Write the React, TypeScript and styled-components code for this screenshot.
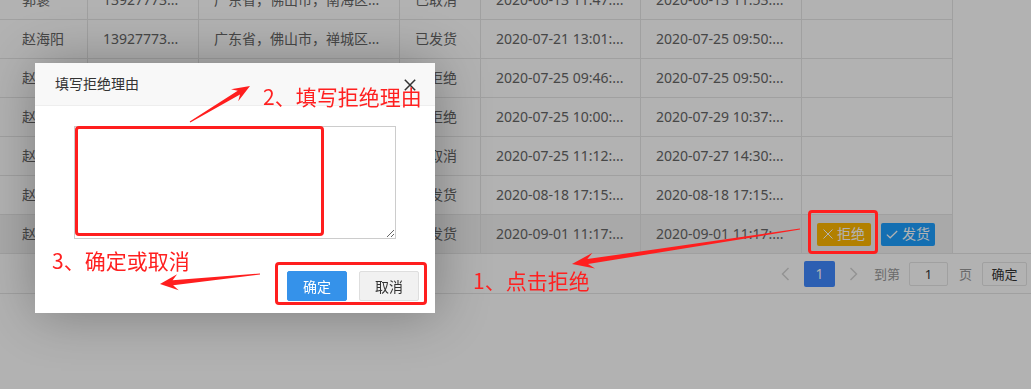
import React from 'react';
import styled, { createGlobalStyle } from 'styled-components';

const GlobalStyle = createGlobalStyle`
  html, body {
    margin: 0;
    padding: 0;
    background: #fff;
  }
  body {
    font-family: "Noto Sans", "Noto Sans CJK SC", sans-serif;
    font-size: 14px;
    color: #666;
  }
`;

const Page = styled.div`
  position: relative;
  width: 1031px;
  height: 389px;
  overflow: hidden;
  background: #fff;
`;

// the list is scrolled a little, the first row is cut at the top
const TableView = styled.div`
  margin-top: -19px;
`;

const Table = styled.table`
  width: 953px;
  table-layout: fixed;
  border-collapse: separate;
  border-spacing: 0;
`;

const Row = styled.tr<{ $hover?: boolean }>`
  background: ${(p) => (p.$hover ? '#f2f2f2' : '#fff')};
`;

const Cell = styled.td<{ $first?: boolean }>`
  height: 20px;
  padding: 9px 15px 9px ${(p) => (p.$first ? '22px' : '15px')};
  line-height: 20px;
  border-right: 1px solid #e6e6e6;
  border-bottom: 1px solid #e6e6e6;
  white-space: nowrap;
  overflow: hidden;
  color: #666;
`;

const Actions = styled.div`
  display: flex;
  align-items: center;
  gap: 10px;
  height: 20px;
`;

const SmallBtn = styled.span<{ $tone: 'warm' | 'normal' }>`
  display: inline-flex;
  align-items: center;
  justify-content: center;
  gap: 4px;
  width: 54px;
  height: 23px;
  flex: none;
  border-radius: 2px;
  font-size: 14px;
  color: #fff;
  background: ${(p) => (p.$tone === 'warm' ? '#ffb800' : '#1e9fff')};
`;

const PageBar = styled.div`
  display: flex;
  align-items: center;
  justify-content: flex-end;
  height: 39px;
  margin-top: -1px;
  padding-right: 4px;
  border-top: 1px solid #e6e6e6;
  border-bottom: 1px solid #e6e6e6;
  font-size: 13px;
  color: #999;
`;

const Chevron = styled.span<{ $gap: number }>`
  display: flex;
  justify-content: center;
  width: 20px;
  margin-right: ${(p) => p.$gap}px;
`;

const Curr = styled.span`
  display: flex;
  align-items: center;
  justify-content: center;
  width: 31px;
  height: 26px;
  margin-right: 9px;
  border-radius: 2px;
  background: #3f89ff;
  color: #fff;
  font-size: 14px;
`;

const Label = styled.span<{ $gap: number }>`
  margin-right: ${(p) => p.$gap}px;
`;

const SkipInput = styled.span`
  display: flex;
  align-items: center;
  justify-content: center;
  width: 39px;
  height: 24px;
  margin-right: 11px;
  box-sizing: border-box;
  border: 1px solid #e6e6e6;
  border-radius: 2px;
  color: #333;
`;

const SkipBtn = styled.span`
  display: flex;
  align-items: center;
  justify-content: center;
  width: 45px;
  height: 24px;
  box-sizing: border-box;
  border: 1px solid #e6e6e6;
  border-radius: 2px;
  background: #fff;
  color: #333;
`;

const Shade = styled.div`
  position: fixed;
  inset: 0;
  background: rgba(0, 0, 0, 0.3);
`;

const Dialog = styled.div`
  position: absolute;
  left: 35px;
  top: 63px;
  width: 400px;
  background: #fff;
  box-shadow: 1px 1px 50px rgba(0, 0, 0, 0.3);
`;

const DialogTitle = styled.div`
  position: relative;
  height: 42px;
  line-height: 42px;
  padding: 0 80px 0 20px;
  background: #f8f8f8;
  border-bottom: 1px solid #eee;
  color: #333;
  font-size: 14px;
`;

const Close = styled.span`
  position: absolute;
  right: 19px;
  top: 16px;
  display: flex;
`;

const DialogBody = styled.div`
  padding-top: 20px;
`;

const Reason = styled.textarea`
  display: block;
  width: 322px;
  height: 113px;
  margin: 0 auto;
  box-sizing: border-box;
  border: 1px solid #ccc;
  padding: 6px;
  font-family: inherit;
  outline: none;
`;

const BtnRow = styled.div`
  display: flex;
  justify-content: flex-end;
  gap: 12px;
  padding: 32px 16px 12px;
`;

const DialogBtn = styled.button<{ $primary?: boolean }>`
  width: 60px;
  height: 30px;
  padding: 0;
  box-sizing: border-box;
  border: 1px solid ${(p) => (p.$primary ? '#3592ea' : '#dedede')};
  border-radius: 2px;
  background: ${(p) => (p.$primary ? '#3592ea' : '#f1f1f1')};
  color: ${(p) => (p.$primary ? '#fff' : '#333')};
  font-family: inherit;
  font-size: 14px;
`;

const Note = styled.span<{ $x: number; $y: number }>`
  position: absolute;
  left: ${(p) => p.$x}px;
  top: ${(p) => p.$y}px;
  color: #ff2020;
  font-family: "Noto Sans CJK SC", sans-serif;
  font-size: 21px;
  line-height: 22px;
  white-space: nowrap;
`;

const Mark = styled.div<{ $x: number; $y: number; $w: number; $h: number }>`
  position: absolute;
  left: ${(p) => p.$x}px;
  top: ${(p) => p.$y}px;
  width: ${(p) => p.$w}px;
  height: ${(p) => p.$h}px;
  box-sizing: border-box;
  border: 3px solid #ff1e1e;
  border-radius: 4px;
`;

const ArrowLayer = styled.svg`
  position: absolute;
  left: 0;
  top: 0;
  pointer-events: none;
`;

const cols = [88, 111, 201, 81, 160, 161, 151];

const rows = [
  ['郭褒', '13927773...', '广东省，佛山市，南海区...', '已取消', '2020-06-13 11:47:...', '2020-06-13 11:53:...'],
  ['赵海阳', '13927773...', '广东省，佛山市，禅城区...', '已发货', '2020-07-21 13:01:...', '2020-07-25 09:50:...'],
  ['赵海阳', '13927773...', '广东省，佛山市，禅城区...', '已拒绝', '2020-07-25 09:46:...', '2020-07-25 09:50:...'],
  ['赵海阳', '13927773...', '广东省，佛山市，禅城区...', '已拒绝', '2020-07-25 10:00:...', '2020-07-29 10:37:...'],
  ['赵海阳', '13927773...', '广东省，佛山市，禅城区...', '已取消', '2020-07-25 11:12:...', '2020-07-27 14:30:...'],
  ['赵海阳', '13927773...', '广东省，佛山市，禅城区...', '已发货', '2020-08-18 17:15:...', '2020-08-18 17:15:...'],
  ['赵海阳', '13927773...', '广东省，佛山市，禅城区...', '待发货', '2020-09-01 11:17:...', '2020-09-01 11:17:...'],
];

const arrowPoints = (tx: number, ty: number, hx: number, hy: number, head: number, half: number, w1: number) => {
  const dx = hx - tx;
  const dy = hy - ty;
  const len = Math.hypot(dx, dy);
  const ux = dx / len;
  const uy = dy / len;
  const nx = -uy;
  const ny = ux;
  const w0 = 1;
  const neckX = hx - ux * head * 0.72;
  const neckY = hy - uy * head * 0.72;
  const backX = hx - ux * head;
  const backY = hy - uy * head;
  const pts = [
    [tx + (nx * w0) / 2, ty + (ny * w0) / 2],
    [neckX + (nx * w1) / 2, neckY + (ny * w1) / 2],
    [backX + nx * half, backY + ny * half],
    [hx, hy],
    [backX - nx * half, backY - ny * half],
    [neckX - (nx * w1) / 2, neckY - (ny * w1) / 2],
    [tx - (nx * w0) / 2, ty - (ny * w0) / 2],
  ];
  return pts.map((p) => p.map((v) => v.toFixed(1)).join(',')).join(' ');
};

const ChevronIcon = ({ dir }: { dir: 'left' | 'right' }) => (
  <svg width="9" height="14" viewBox="0 0 9 14">
    <polyline
      points={dir === 'left' ? '7.5,1 1.5,7 7.5,13' : '1.5,1 7.5,7 1.5,13'}
      fill="none"
      stroke="#d2d2d2"
      strokeWidth="1.4"
    />
  </svg>
);

const App: React.FC = () => {
  return (
    <Page>
      <GlobalStyle />
      <TableView>
        <Table>
          <colgroup>
            {cols.map((w, i) => (
              <col key={i} style={{ width: w }} />
            ))}
          </colgroup>
          <tbody>
            {rows.map((r, i) => {
              const last = i === rows.length - 1;
              return (
                <Row key={i} $hover={last}>
                  {r.map((c, j) => (
                    <Cell key={j} $first={j === 0}>
                      {c}
                    </Cell>
                  ))}
                  <Cell>
                    {last && (
                      <Actions>
                        <SmallBtn $tone="warm">
                          <svg width="10" height="10" viewBox="0 0 10 10">
                            <path d="M0.5 0.5L9.5 9.5M9.5 0.5L0.5 9.5" stroke="#fff" strokeWidth="1" />
                          </svg>
                          拒绝
                        </SmallBtn>
                        <SmallBtn $tone="normal">
                          <svg width="12" height="9" viewBox="0 0 12 9">
                            <polyline points="0.8,4.6 4.2,7.8 11.2,1" fill="none" stroke="#fff" strokeWidth="1.2" />
                          </svg>
                          发货
                        </SmallBtn>
                      </Actions>
                    )}
                  </Cell>
                </Row>
              );
            })}
          </tbody>
        </Table>
      </TableView>

      <PageBar>
        <Chevron $gap={8}>
          <ChevronIcon dir="left" />
        </Chevron>
        <Curr>1</Curr>
        <Chevron $gap={10}>
          <ChevronIcon dir="right" />
        </Chevron>
        <Label $gap={9}>到第</Label>
        <SkipInput>1</SkipInput>
        <Label $gap={10}>页</Label>
        <SkipBtn>确定</SkipBtn>
      </PageBar>

      <Shade />

      <Dialog>
        <DialogTitle>
          填写拒绝理由
          <Close>
            <svg width="12" height="12" viewBox="0 0 12 12">
              <path d="M0.8 0.8L11.2 11.2M11.2 0.8L0.8 11.2" stroke="#333" strokeWidth="1.5" />
            </svg>
          </Close>
        </DialogTitle>
        <DialogBody>
          <Reason />
        </DialogBody>
        <BtnRow>
          <DialogBtn $primary>确定</DialogBtn>
          <DialogBtn>取消</DialogBtn>
        </BtnRow>
      </Dialog>

      <Mark $x={75} $y={126} $w={249} $h={110} />
      <Mark $x={275} $y={262} $w={152} $h={43} />
      <Mark $x={808} $y={210} $w={70} $h={44} />

      <ArrowLayer width="1031" height="389" viewBox="0 0 1031 389">
        <polygon points={arrowPoints(800, 229, 572, 264, 22, 8, 5)} fill="#ff1e1e" />
        <polygon points={arrowPoints(190, 122, 250, 86, 18, 7, 4.5)} fill="#ff1e1e" />
        <polygon points={arrowPoints(260, 274, 160, 284, 18, 8, 5)} fill="#ff1e1e" />
      </ArrowLayer>

      <Note $x={263} $y={85}>2、填写拒绝理由</Note>
      <Note $x={52} $y={249}>3、确定或取消</Note>
      <Note $x={473} $y={269}>1、点击拒绝</Note>
    </Page>
  );
};

export default App;
